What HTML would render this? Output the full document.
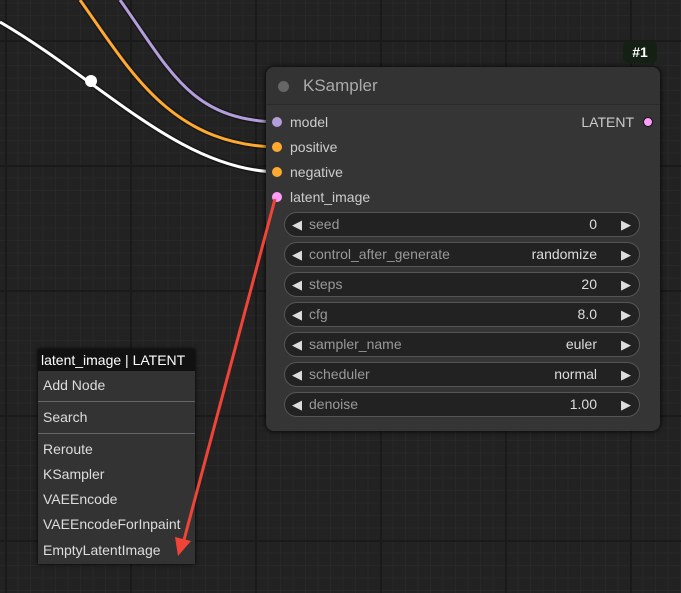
<!DOCTYPE html>
<html><head><style>
body{margin:0;width:681px;height:593px;overflow:hidden;background:#222;font-family:"Liberation Sans",Arial,sans-serif;position:relative;
background-image:linear-gradient(90deg,#1a1a1a 2px,transparent 2px),linear-gradient(#1a1a1a 2px,transparent 2px),linear-gradient(90deg,#282828 1px,transparent 1px),linear-gradient(#282828 1px,transparent 1px);
background-size:125px 125px,125px 125px,12.5px 12.5px,12.5px 12.5px;background-position:5px 40px,5px 40px,5px 40px,5px 40px;}
.a{position:absolute}
.node{left:266px;top:67px;width:394px;height:364px;background:#353535;border-radius:8px;box-shadow:0 0 6px #000}
.title{left:0;top:0;width:394px;height:37px;background:#333;border-bottom:1px solid #2a2a2a;border-radius:8px 8px 0 0}
.lbl{font-size:14px;color:#ccc}
.dot{width:10px;height:10px;border-radius:50%}
.w{left:18px;width:354px;height:23px;border:1px solid #555;border-radius:13px;background:#222;font-size:14px;line-height:23px}
.w .n{position:absolute;left:24px;color:#999}
.w .v{position:absolute;right:42px;color:#ddd}
.w .l{position:absolute;left:7px;color:#ddd;font-size:13px}
.w .r{position:absolute;right:8px;color:#ddd;font-size:13px}
.menu{left:38px;top:349px;width:157px;height:215px;background:#333;box-shadow:0 0 4px #000}
.mi{position:absolute;left:5px;font-size:14px;color:#ddd}
</style></head><body>
<svg class="a" style="left:0;top:0" width="681" height="593">
<g fill="none" stroke-width="6" stroke="#111" opacity=".6">
<path d="M120 0 C170 70 190 120 277 122"/><path d="M80 0 C130 70 170 145 277 147"/><path d="M0 22 C100 80 180 170 277 172"/></g>
<path d="M120 0 C170 70 190 120 277 122" fill="none" stroke="#b39ddb" stroke-width="3"/>
<path d="M80 0 C130 70 170 145 277 147" fill="none" stroke="#ffa931" stroke-width="3"/>
<path d="M0 22 C100 80 180 170 277 172" fill="none" stroke="#fff" stroke-width="3"/>
<circle cx="91" cy="81" r="6" fill="#fff"/>
</svg>
<div class="a node">
<div class="a title"><div class="a dot" style="left:12px;top:14px;width:11px;height:11px;background:#666"></div>
<div class="a" style="left:37px;top:9px;font-size:17px;color:#aaa">KSampler</div></div>
<div class="a dot" style="left:6px;top:50px;background:#b39ddb"></div><div class="a lbl" style="left:24px;top:47px">model</div>
<div class="a dot" style="left:6px;top:75px;background:#ffa931"></div><div class="a lbl" style="left:24px;top:72px">positive</div>
<div class="a dot" style="left:6px;top:100px;background:#ffa931"></div><div class="a lbl" style="left:24px;top:97px">negative</div>
<div class="a dot" style="left:6px;top:125px;background:#ff9cf9"></div><div class="a lbl" style="left:24px;top:122px">latent_image</div>
<div class="a lbl" style="right:26px;top:47px">LATENT</div><div class="a dot" style="right:7px;top:50px;background:#ff9cf9;border:1px solid #111;width:8px;height:8px"></div>
<div class="a w" style="top:145px"><span class="l">◀</span><span class="n">seed</span><span class="v">0</span><span class="r">▶</span></div>
<div class="a w" style="top:175px"><span class="l">◀</span><span class="n">control_after_generate</span><span class="v">randomize</span><span class="r">▶</span></div>
<div class="a w" style="top:205px"><span class="l">◀</span><span class="n">steps</span><span class="v">20</span><span class="r">▶</span></div>
<div class="a w" style="top:235px"><span class="l">◀</span><span class="n">cfg</span><span class="v">8.0</span><span class="r">▶</span></div>
<div class="a w" style="top:265px"><span class="l">◀</span><span class="n">sampler_name</span><span class="v">euler</span><span class="r">▶</span></div>
<div class="a w" style="top:295px"><span class="l">◀</span><span class="n">scheduler</span><span class="v">normal</span><span class="r">▶</span></div>
<div class="a w" style="top:325px"><span class="l">◀</span><span class="n">denoise</span><span class="v">1.00</span><span class="r">▶</span></div>
</div>
<div class="a" style="left:623px;top:41px;width:34px;height:22px;background:#142014;border-radius:5px;color:#fff;font-weight:bold;font-size:14px;text-align:center;line-height:22px">#1</div>
<div class="a menu">
<div class="a" style="left:0;top:0;width:157px;height:22px;background:#111;color:#fff;font-size:14px;line-height:22px;text-indent:3px;white-space:nowrap;overflow:hidden">latent_image | LATENT</div>
<div class="mi" style="top:28px">Add Node</div>
<div class="a" style="left:0;top:52px;width:157px;height:1px;background:#666"></div>
<div class="mi" style="top:60px">Search</div>
<div class="a" style="left:0;top:84px;width:157px;height:1px;background:#666"></div>
<div class="mi" style="top:92px">Reroute</div>
<div class="mi" style="top:117px">KSampler</div>
<div class="mi" style="top:142px">VAEEncode</div>
<div class="mi" style="top:167px;white-space:nowrap;width:152px;overflow:hidden">VAEEncodeForInpaint</div>
<div class="mi" style="top:193px">EmptyLatentImage</div>
</div>
<svg class="a" style="left:0;top:0" width="681" height="593">
<line x1="275" y1="199" x2="184" y2="540" stroke="#f04438" stroke-width="3"/>
<polygon points="178,556 175,537 191,541" fill="#f04438"/>
</svg>
</body></html>
